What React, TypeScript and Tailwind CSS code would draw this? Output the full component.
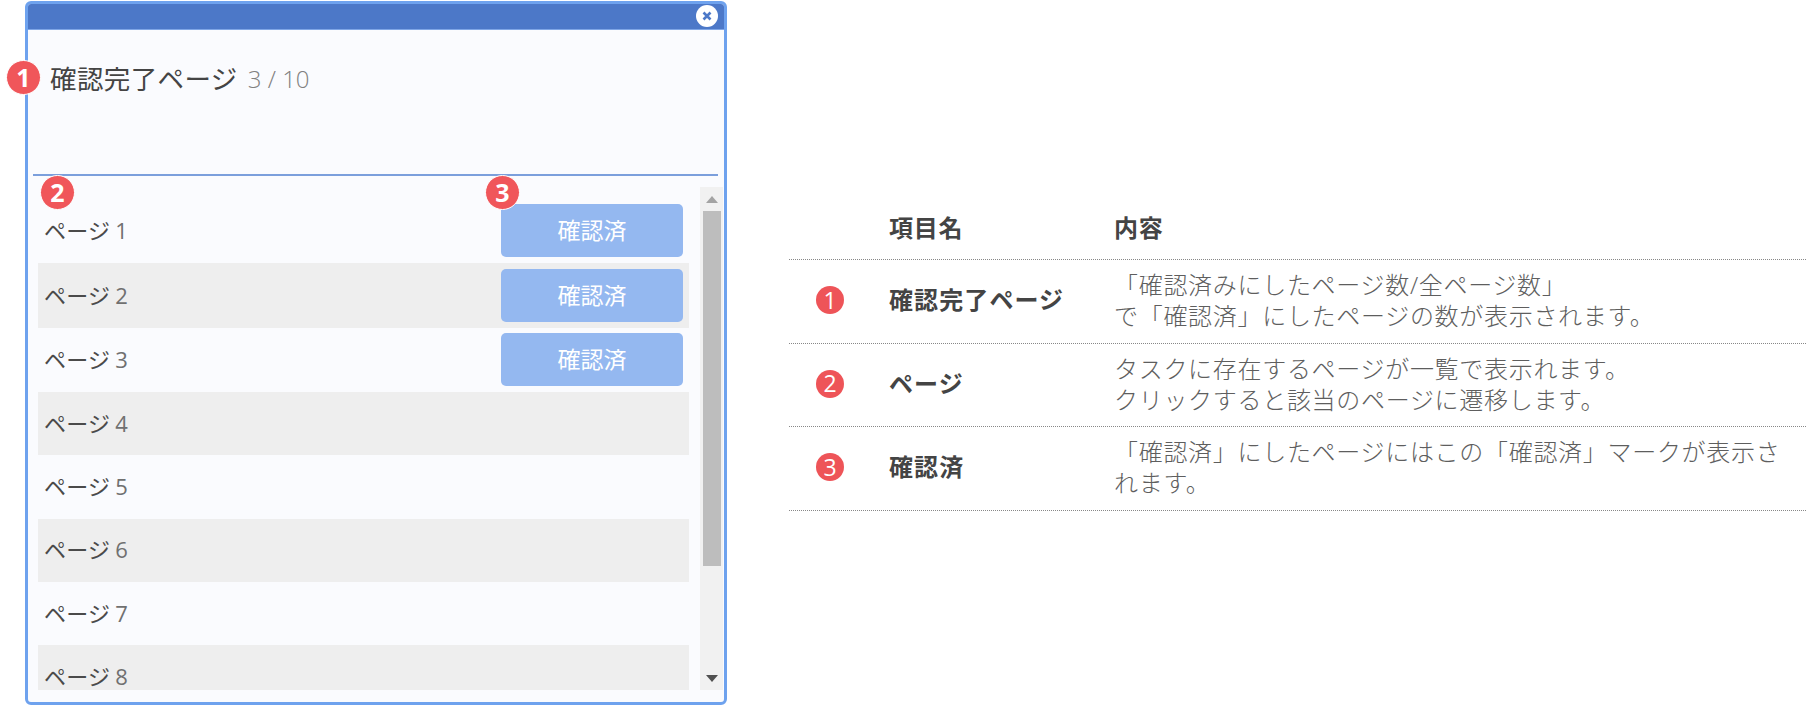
const font = { fontFamily: '"Open Sans","Noto Sans CJK JP",sans-serif' };
const rowsTop = [1, 2, 3];
const rowsRest = [4, 5, 6, 7, 8];

function Badge({ n, className }: { n: number; className: string }) {
  return (
    <div className={`absolute flex h-[35px] w-[35px] items-center justify-center rounded-full border border-white bg-[#f0565a] text-[25px] font-bold leading-none text-white ${className}`}>
      {n}
    </div>
  );
}

function Row({ n, done, h }: { n: number; done?: boolean; h: string }) {
  return (
    <div className={`flex w-full shrink-0 items-center justify-between pl-[6px] pr-[6px] even:bg-[#eeeeee] ${h}`}>
      <span className="mb-[2px] text-[22px] leading-[24px] tracking-[0.2px] text-[#4a4a4a]">ページ<span className="ml-[5px] text-[22px] text-[#707070]">{n}</span></span>
      {done && (
        <div className={`flex h-[53px] w-[182px] items-center justify-center rounded-[5px] bg-[#94b8f0] text-[23px] text-white ${n === 3 ? 'mb-[1px]' : ''}`}>確認済</div>
      )}
    </div>
  );
}

function TableRow({ n, name, lines }: { n: number; name: string; lines: string[] }) {
  return (
    <div className="flex h-[83.6px] items-center border-b border-dotted border-[#888] pb-[2px]">
      <div className="flex w-[100px] justify-center pr-[18px]">
        <div className="flex h-[28px] w-[28px] items-center justify-center rounded-full bg-[#ee5458] text-[23px] leading-none text-white">{n}</div>
      </div>
      <div className="w-[225px] text-[24px] font-bold tracking-[1.1px] text-[#444]">{name}</div>
      <div className="flex-1 text-[24px] leading-[31px] font-light tracking-[0.7px] text-[#5e5e5e]">
        {lines.map((l) => <div key={l}>{l}</div>)}
      </div>
    </div>
  );
}

export default function App() {
  return (
    <div style={font} className="flex h-[708px] w-[1806px] overflow-hidden bg-white">
      <div className="relative ml-[25px] mt-px h-[704px] w-[702px] shrink-0">
        <div className="flex h-full flex-col overflow-hidden rounded-[6px] border-[3px] border-[#6ea2ee] bg-[#fafbfe]">
          <div className="flex h-[26px] shrink-0 items-start justify-end border-b border-[#7fa6e6] bg-[#4c78c8] pr-[6px]">
            <div className="mt-[1px] flex h-[22px] w-[22px] items-center justify-center rounded-full bg-white">
              <svg width="12" height="12" viewBox="0 0 12 12" fill="none" stroke="#4c78c8" strokeWidth="2.6">
                <path d="M2.5 2.5l7 7M9.5 2.5l-7 7" />
              </svg>
            </div>
          </div>
          <div className="ml-[5px] mr-[6px] flex h-[146px] shrink-0 items-start border-b-2 border-[#7b9fdc] pl-[17px] pt-[29px]">
            <span className="text-[26.5px] leading-[40px] tracking-[0.4px] text-[#444]">確認完了ページ</span>
            <span className="ml-[10px] text-[24px] font-light leading-[40px] text-[#808080]">3 / 10</span>
          </div>
          <div className="ml-[10px] mt-[11px] flex h-[503px] w-[685px] shrink-0 items-start justify-between">
            <div className="mt-[11px] flex h-[492px] w-[651px] flex-col overflow-hidden">
              {rowsTop.map((n) => <Row key={n} n={n} done h={n === 3 ? 'h-[64px]' : 'h-[65px]'} />)}
              {rowsRest.map((n) => <Row key={n} n={n} h="h-[63.33px]" />)}
            </div>
            <div className="flex h-[503px] w-[23px] flex-col items-center bg-[#f1f1f1]">
              <div className="flex h-[24px] shrink-0 items-center justify-center">
                <svg width="12" height="7" viewBox="0 0 12 7"><path d="M6 0l6 7H0z" fill="#a3a3a3" /></svg>
              </div>
              <div className="h-[355px] w-[18px] bg-[#bdbdbd]" />
              <div className="flex flex-1 items-end justify-center pb-[8px]">
                <svg width="12" height="7" viewBox="0 0 12 7"><path d="M0 0h12L6 7z" fill="#505050" /></svg>
              </div>
            </div>
          </div>
        </div>
        <Badge n={1} className="left-[-19px] top-[59px]" />
        <Badge n={2} className="left-[15px] top-[174px]" />
        <Badge n={3} className="left-[460px] top-[174px]" />
      </div>
      <div className="ml-[62px] mt-[176px] w-[1017px] shrink-0">
        <div className="flex h-[84px] items-end border-b border-dotted border-[#888] pb-[13px] text-[24px] font-bold tracking-[0.8px] text-[#444]">
          <div className="w-[100px]" />
          <div className="w-[225px]">項目名</div>
          <div>内容</div>
        </div>
        <TableRow n={1} name="確認完了ページ" lines={['「確認済みにしたページ数/全ページ数」', 'で「確認済」にしたページの数が表示されます。']} />
        <TableRow n={2} name="ページ" lines={['タスクに存在するページが一覧で表示れます。', 'クリックすると該当のページに遷移します。']} />
        <TableRow n={3} name="確認済" lines={['「確認済」にしたページにはこの「確認済」マークが表示さ', 'れます。']} />
      </div>
    </div>
  );
}
